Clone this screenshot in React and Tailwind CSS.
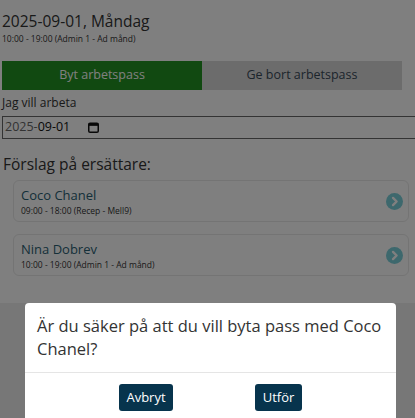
import React from 'react';

const shifts = [
  { name: 'Coco Chanel', time: '09:00 - 18:00 (Recep - Mell9)' },
  { name: 'Nina Dobrev', time: '10:00 - 19:00 (Admin 1 - Ad månd)' },
];

function Chevron() {
  return (
    <svg width="17" height="17" viewBox="0 0 16 16">
      <circle cx="8" cy="8" r="8" fill="#7bd0da" />
      <path d="M6.6 4.6 L10 8 L6.6 11.4" fill="none" stroke="#ffffff" strokeWidth="2.2" strokeLinecap="round" strokeLinejoin="round" />
    </svg>
  );
}

function CalendarIcon() {
  return (
    <svg width="11" height="11" viewBox="0 0 11 11">
      <rect x="0.75" y="1.25" width="9.5" height="9" rx="1.3" fill="none" stroke="#111" strokeWidth="1.5" />
      <rect x="0.75" y="1.25" width="9.5" height="2.6" fill="#111" />
    </svg>
  );
}

export default function App() {
  return (
    <div
      className="relative h-[418px] w-[415px] overflow-hidden bg-[#eeeeee] text-[#333]"
      style={{ fontFamily: '"Open Sans", "Noto Sans", sans-serif' }}
    >
      <div className="h-[303px] bg-white pl-[2px]">
        <div className="pt-[9px] text-[15.5px] leading-[24px] text-[#333]">2025-09-01, Måndag</div>
        <div className="text-[8.5px] leading-[12px] text-[#333]">10:00 - 19:00 (Admin 1 - Ad månd)</div>

        <div className="mt-[16px] flex w-[400px]">
          <button className="h-[29px] w-[200px] bg-[#239322] text-[12.5px] text-white">Byt arbetspass</button>
          <button className="h-[29px] w-[200px] bg-[#d9d9d9] text-[12.5px] text-[#3a4a58]">Ge bort arbetspass</button>
        </div>

        <div className="mt-[4px] text-[12px] leading-[17px] text-[#333]">Jag vill arbeta</div>
        <div className="mt-[5px] flex h-[23px] w-[430px] items-center border border-[#666] bg-white pl-[2px] text-[12.5px]">
          <span className="text-[#666]">2025-</span>
          <span className="text-[#111]">09-01</span>
          <span className="ml-[18px] flex items-center">
            <CalendarIcon />
          </span>
        </div>

        <div className="mt-[14px] pl-[1px] text-[15.5px] leading-[22px] text-[#333]">Förslag på ersättare:</div>

        <div className="ml-[11px] mt-[5px] flex w-[396px] flex-col gap-[12px]">
          {shifts.map((s) => (
            <div key={s.name} className="flex h-[42px] items-center justify-between rounded-[6px] border border-[#e8e8e8] pl-[7px] pr-[5px]">
              <div>
                <div className="text-[13px] leading-[18px] text-[#2a6073]">{s.name}</div>
                <div className="text-[8.5px] leading-[13px] text-[#333]">{s.time}</div>
              </div>
              <Chevron />
            </div>
          ))}
        </div>
      </div>

      <div className="absolute inset-0 bg-black/50" />

      <div className="absolute left-[25px] top-[303px] h-[140px] w-[371px] rounded-t-[4px] bg-white">
        <div className="border-b border-[#e5e5e5] px-[12px] pb-[12px] pt-[11px] text-[16.5px] leading-[23px] text-[#333]">
          Är du säker på att du vill byta pass med Coco Chanel?
        </div>
        <div className="flex pt-[11px]">
          <button className="ml-[94px] h-[27px] w-[54px] rounded-[3px] bg-[#07344d] text-[13px] text-white">Avbryt</button>
          <button className="ml-[82px] h-[27px] w-[47px] rounded-[3px] bg-[#07344d] text-[13px] text-white">Utför</button>
        </div>
      </div>
    </div>
  );
}
